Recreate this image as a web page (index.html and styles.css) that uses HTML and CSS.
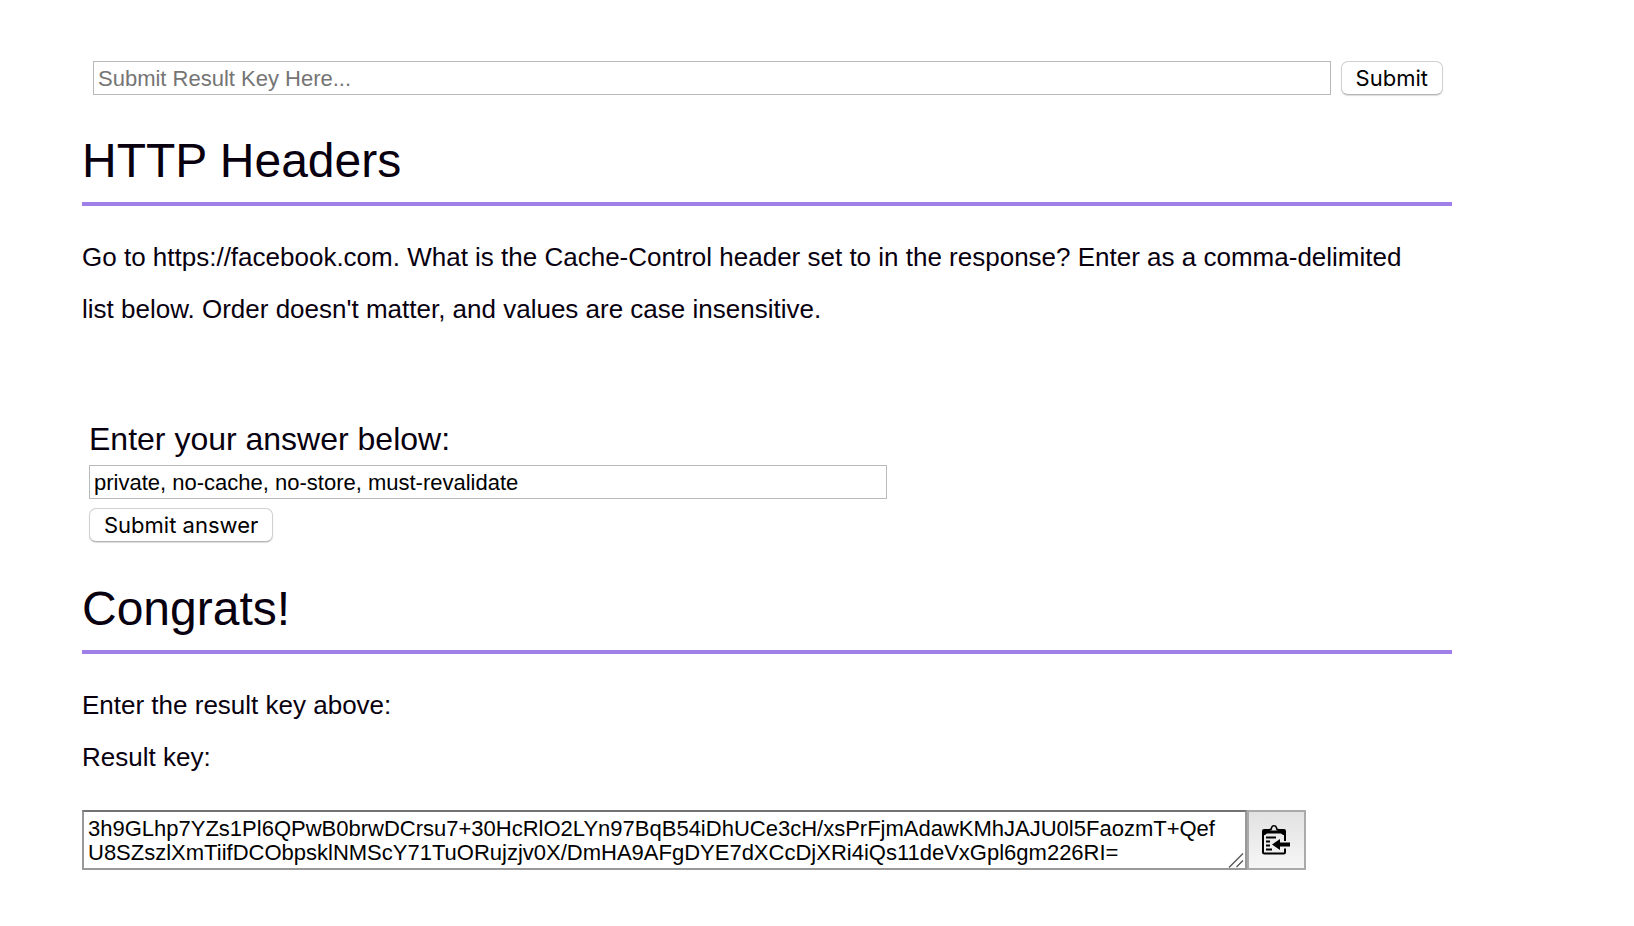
FILE: index.html
```html
<!DOCTYPE html>
<html lang="en">
<head>
<meta charset="utf-8">
<meta name="viewport" content="width=device-width, initial-scale=1">
<title>HTTP Headers</title>
<link rel="stylesheet" href="styles.css">
</head>
<body>
<main class="page">
  <form class="key-form">
    <input class="field key-input" type="text" placeholder="Submit Result Key Here..." aria-label="Result key to submit">
    <button class="button" type="button">Submit</button>
  </form>
  <h1 class="heading">HTTP Headers</h1>
  <p class="text">Go to https://facebook.com. What is the Cache-Control header set to in the response? Enter as a comma-delimited list below. Order doesn't matter, and values are case insensitive.</p>
  <form class="answer-form">
    <label class="answer-label" for="answer">Enter your answer below:</label>
    <input class="field answer-input" id="answer" type="text" value="private, no-cache, no-store, must-revalidate">
    <button class="button" type="button">Submit answer</button>
  </form>
  <section>
    <h1 class="heading">Congrats!</h1>
    <p class="text">Enter the result key above:</p>
    <label class="text result-label" for="result">Result key:</label>
    <div class="result">
      <textarea class="result-key" id="result" spellcheck="false">3h9GLhp7YZs1Pl6QPwB0brwDCrsu7+30HcRlO2LYn97BqB54iDhUCe3cH/xsPrFjmAdawKMhJAJU0l5FaozmT+QefU8SZszlXmTiifDCObpsklNMScY71TuORujzjv0X/DmHA9AFgDYE7dXCcDjXRi4iQs11deVxGpl6gm226RI=</textarea>
      <svg class="grip" viewBox="0 0 16 16" aria-hidden="true"><path d="M1 15.500 15 1.500M8.500 15 15 8.500" fill="none" stroke="#555" stroke-width="1.300"/></svg>
      <button class="copy" type="button" aria-label="Copy to clipboard">
        <svg class="copy-icon" viewBox="0 0 28 30" aria-hidden="true">
          <path d="M23 23.500V27q0 1.500-1.500 1.500h-19Q1 28.500 1 27V7M23 8v8" fill="none" stroke="#000" stroke-width="2"/>
          <path fill-rule="evenodd" d="M0 10V6q0-2 2-2h5Q9 4 9 2 9.500 0 12 0t3 2q0 2 2 2h5q2 0 2 2v4h-3l-2-1.500H5L3 10zM8 5.500h8Q13.500 5 13.500 2.500q0-1-1.500-1t-1.500 1Q10.500 5 8 5.500z"/>
          <path d="M4 12.500h10M4 16.500h4M4 20.500h4M4 24.500h6" stroke="#000" stroke-width="2"/>
          <path d="M10 19.500 18 14v3.500h10v4H18V25z"/>
        </svg>
      </button>
    </div>
  </section>
</main>
</body>
</html>
```
FILE: styles.css
```css
* {
  box-sizing: border-box;
}

body {
  margin: 0;
  background: #fff;
  color: #08000f;
  font-family: "Liberation Sans", Arial, sans-serif;
}

.page {
  margin: 0 182px 0 82px;
  padding: 60px 0 48px;
}

.key-form {
  display: flex;
  align-items: center;
  gap: 10px;
  padding: 0 9px 0 11px;
}

.field {
  height: 34px;
  padding: 2px 4px 0;
  border: 1px solid #bababa;
  background: #fff;
  color: #000;
  font: 22px "Liberation Sans", Arial, sans-serif;
}

.field::placeholder {
  color: #757575;
}

.key-input {
  flex: 1;
  min-width: 0;
  margin-top: 1px;
}

.button {
  height: 34px;
  padding: 0 14px;
  border: 1px solid #d0d0d0;
  border-bottom-color: #b4b4b4;
  border-radius: 7px;
  background: #fff;
  box-shadow: 0 1px 1px #ddd;
  color: #000;
  font: 22px Inter, sans-serif;
}

.heading {
  margin: 36px 0 25px;
  padding-bottom: 11px;
  border-bottom: 4px solid #a080e8;
  font-size: 48px;
  font-weight: 400;
  line-height: 60px;
}

.text {
  margin: 0;
  padding-right: 24px;
  font-size: 26px;
  line-height: 52px;
}

.answer-form {
  display: flex;
  flex-direction: column;
  align-items: flex-start;
  margin-top: 82px;
  padding: 0 7px 1px;
}

.answer-label {
  margin-bottom: 4px;
  font-size: 32px;
  line-height: 44px;
}

.answer-input {
  width: 100%;
  max-width: 798px;
  margin-bottom: 9px;
}

.result-label {
  display: block;
}

.result {
  position: relative;
  display: grid;
  grid-template-columns: 85% 59px;
  margin-top: 27px;
}

.result-key {
  height: 60px;
  padding: 5px 18px 3px 4px;
  overflow: hidden;
  resize: none;
  border: 2px solid #999;
  border-top-color: #737373;
  border-radius: 0;
  color: #000;
  font: 22px/24px "Liberation Sans", Arial, sans-serif;
  word-break: break-all;
}

.grip {
  position: absolute;
  right: calc(15% + 3px);
  bottom: 2px;
  width: 16px;
  height: 16px;
}

.copy {
  display: flex;
  align-items: center;
  justify-content: center;
  padding: 0;
  border: 2px solid #aaa;
  background: linear-gradient(#e2e2e2, #f6f6f6);
}

.copy-icon {
  width: 28px;
  height: 30px;
}
```
